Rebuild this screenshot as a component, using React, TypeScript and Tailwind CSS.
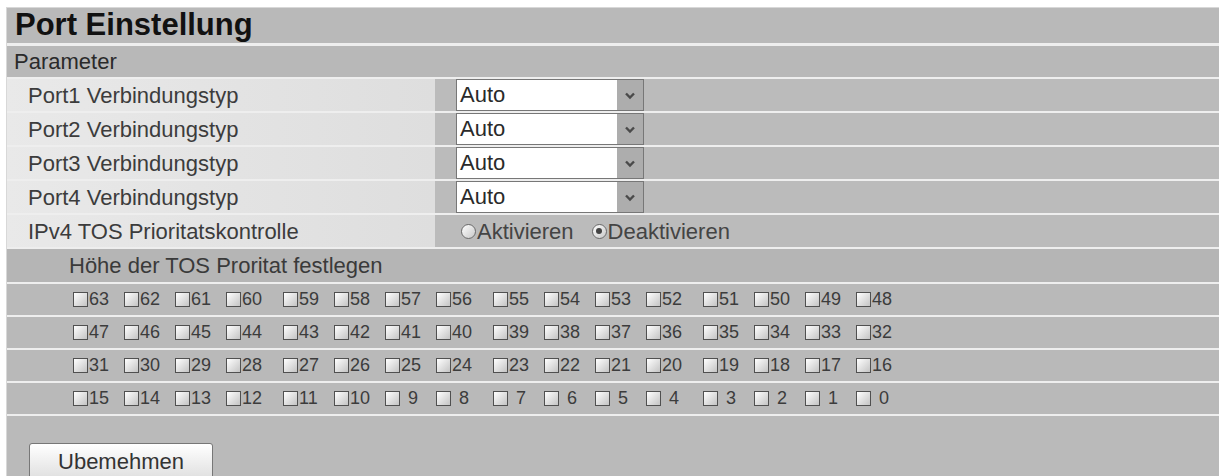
import React from 'react';

const PORTS = ['Port1', 'Port2', 'Port3', 'Port4'];

// 64 TOS levels, 16 per row, in groups of 4
const TOS_ROWS = [0, 1, 2, 3].map((r) =>
  [0, 1, 2, 3].map((g) => [0, 1, 2, 3].map((i) => 63 - r * 16 - g * 4 - i))
);

const font = { fontFamily: '"Liberation Sans", Arial, sans-serif' };

function Chevron() {
  return (
    <svg width="12" height="9" viewBox="0 0 12 9">
      <polyline points="2,2.5 6,6.5 10,2.5" fill="none" stroke="#4a4a4a" strokeWidth="2.4" />
    </svg>
  );
}

function Select() {
  return (
    <div className="flex h-[32px] w-[188px] items-stretch border border-[#777] bg-white">
      <span className="flex-1 pl-[3px] text-[22px] leading-[30px] text-[#2a2a2a]">Auto</span>
      <span className="flex w-[26px] items-center justify-center bg-[#adadad]">
        <Chevron />
      </span>
    </div>
  );
}

function Radio({ checked, label }: { checked?: boolean; label: string }) {
  return (
    <span className="flex items-center">
      <span className="flex h-[15px] w-[15px] items-center justify-center rounded-full border border-[#6a6a6a] bg-gradient-to-br from-white to-[#c8c8c8]">
        {checked && <span className="h-[6px] w-[6px] rounded-full bg-[#444]" />}
      </span>
      <span className="ml-[1px]">{label}</span>
    </span>
  );
}

function Box() {
  return (
    <span className="inline-block h-[15px] w-[15px] shrink-0 border border-[#505050] bg-gradient-to-br from-white to-[#c4c4c4]" />
  );
}

export default function App() {
  return (
    <div className="min-h-[476px] bg-white pt-[7px]" style={font}>
      <div className="ml-[6px] flex w-[1213px] flex-col border-l border-t border-[#d8d8d8] bg-[#eeeeee]">
        <div className="flex h-[35px] items-end bg-[#b9b9b9] pb-[1px] pl-[8px] text-[31px] font-bold leading-[34px] text-[#111]">
          Port Einstellung
        </div>
        <div className="mt-[3px] flex h-[31px] items-center bg-[#b8b8b8] pl-[7px] text-[22px] text-[#2a2a2a]">
          Parameter
        </div>

        {PORTS.map((p) => (
          <div key={p} className="mt-[2px] flex h-[32px]">
            <div className="flex w-[428px] items-center bg-gradient-to-r from-[#e9e9e9] to-[#dedede] pl-[21px] text-[22px] text-[#3c3c3c]">
              {p} Verbindungstyp
            </div>
            <div className="flex flex-1 items-center bg-[#bbbbbb] pl-[21px]">
              <Select />
            </div>
          </div>
        ))}

        <div className="mt-[2px] flex h-[32px]">
          <div className="flex w-[428px] items-center bg-gradient-to-r from-[#e9e9e9] to-[#dedede] pl-[21px] text-[22px] text-[#3c3c3c]">
            IPv4 TOS Prioritatskontrolle
          </div>
          <div className="flex flex-1 items-center gap-[18px] bg-[#bbbbbb] pl-[26px] text-[22px] text-[#444]">
            <Radio label="Aktivieren" />
            <Radio checked label="Deaktivieren" />
          </div>
        </div>

        <div className="mt-[2px] flex h-[33px] items-center bg-[#b5b5b5] pl-[62px] text-[22px] text-[#3a3a3a]">
          Höhe der TOS Proritat festlegen
        </div>

        {TOS_ROWS.map((row, ri) => (
          <div key={ri} className="mt-[2px] flex h-[31px] items-center bg-[#b9b9b9] pl-[66px] text-[18px] text-[#3c3c3c]">
            {row.map((group, gi) => (
              <div key={gi} className="mr-[6px] flex">
                {group.map((n) => (
                  <span key={n} className="flex w-[51px] items-center">
                    <Box />
                    <span className={n < 10 ? 'ml-[8px]' : 'ml-[1px]'}>{n}</span>
                  </span>
                ))}
              </div>
            ))}
          </div>
        ))}

        <div className="mt-[2px] h-[62px] bg-[#bababa] pl-[22px] pt-[27px]">
          <button
            type="button"
            className="h-[36px] w-[184px] rounded-[3px] border border-[#777] bg-gradient-to-b from-white to-[#e0e0e0] text-[22px] text-[#333]"
          >
            Ubemehmen
          </button>
        </div>
      </div>
    </div>
  );
}
